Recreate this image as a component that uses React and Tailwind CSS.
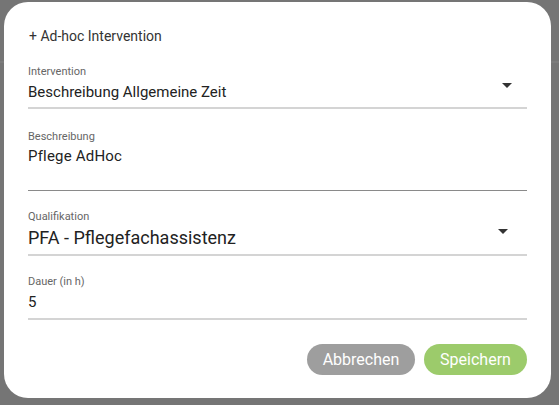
import React from 'react';

const Arrow = ({ className }) => (
  <svg className={className} width="10" height="5" viewBox="0 0 10 5">
    <path d="M0 0 L10 0 L5 5 Z" fill="#333333" />
  </svg>
);

const Field = ({ label, value, select, line, arrowClass, valueClass }) => (
  <div className={`flex flex-col ${line}`}>
    <span className="text-[11px] leading-[13px] text-[#666666]">{label}</span>
    <div className="flex items-center justify-between">
      <span className={valueClass}>{value}</span>
      {select && <Arrow className={arrowClass} />}
    </div>
  </div>
);

export default function App() {
  return (
    <div
      className="relative w-[559px] h-[405px] bg-[#757575] overflow-hidden"
      style={{ fontFamily: 'Roboto, "Liberation Sans", sans-serif' }}
    >
      <div className="absolute left-0 right-0 top-[61px] h-[2px] bg-[#7c7c7c]" />
      <div className="absolute left-[4px] top-[2px] w-[547px] h-[396px] bg-white rounded-[24px] px-6 pt-[24px] flex flex-col">
        <div className="text-[14px] leading-[20px] text-[#333333] pl-px">+ Ad-hoc Intervention</div>

        <div className="mt-[19px]">
          <Field
            label="Intervention"
            value="Beschreibung Allgemeine Zeit"
            select
            arrowClass="mr-[15px] -mt-[10px]"
            valueClass="text-[15px] leading-[20px] text-[#222222] mt-[4px]"
            line="border-b-2 border-[#d4d4d4] pb-[5px]"
          />
        </div>

        <div className="mt-[21px]">
          <Field
            label="Beschreibung"
            value="Pflege AdHoc"
            valueClass="text-[15px] leading-[20px] text-[#222222] mt-[3px] tracking-[0.2px]"
            line="border-b border-[#8a8a8a] pb-[24px]"
          />
        </div>

        <div className="mt-[19px]">
          <Field
            label="Qualifikation"
            value="PFA - Pflegefachassistenz"
            select
            arrowClass="mr-[19px] -mt-[10px]"
            valueClass="text-[18px] leading-[24px] text-[#222222] mt-[3px]"
            line="border-b-2 border-[#d4d4d4] pb-[4px]"
          />
        </div>

        <div className="mt-[19px]">
          <Field
            label="Dauer (in h)"
            value="5"
            valueClass="text-[15px] leading-[20px] text-[#222222] mt-[4px]"
            line="border-b-2 border-[#d4d4d4] pb-[6px]"
          />
        </div>

        <div className="flex justify-end gap-[9px] mt-[24px]">
          <button className="h-[31px] w-[108px] rounded-full bg-[#9e9e9e] text-white text-[16px] leading-[20px]">
            Abbrechen
          </button>
          <button className="h-[31px] w-[103px] rounded-full bg-[#9ccb6b] text-white text-[16px] leading-[20px]">
            Speichern
          </button>
        </div>
      </div>
    </div>
  );
}
